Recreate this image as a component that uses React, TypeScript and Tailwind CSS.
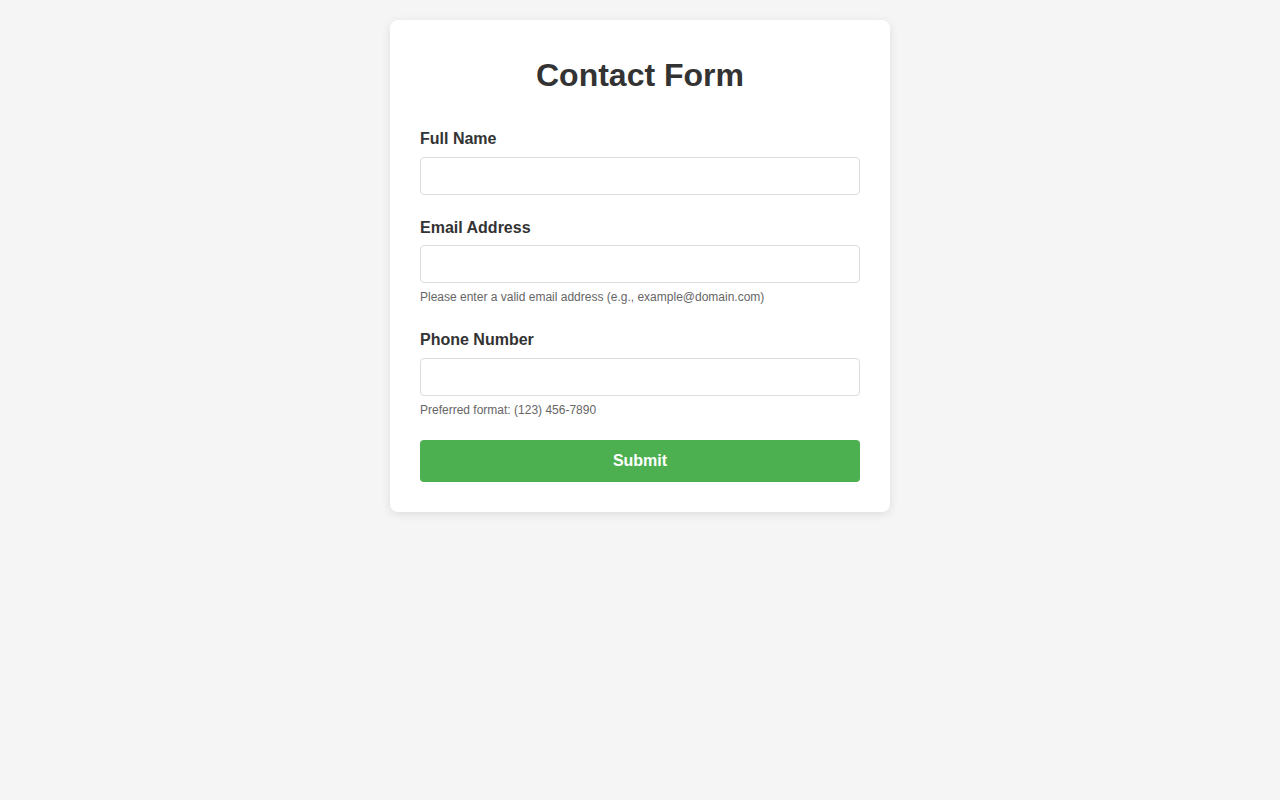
export default function App() {
  return (
    <div className="min-h-screen bg-[#f5f5f5] pt-[20px] font-['Liberation_Sans',Arial,sans-serif] text-[#333]">
      <div className="mx-auto w-[500px] rounded-[8px] bg-white px-[30px] pt-[37px] pb-[30px] shadow-[0_2px_10px_rgba(0,0,0,0.1)]">
        <h1 className="mb-[35px] text-center text-[32px] font-bold leading-[37px]">Contact Form</h1>

        <form onSubmit={(e) => e.preventDefault()}>
          {/* Full name */}
          <div className="mb-[23px]">
            <label htmlFor="name" className="mb-[9px] block text-[16px] font-bold leading-[19px]">
              Full Name
            </label>
            <input
              id="name"
              type="text"
              className="block h-[38px] w-full rounded-[4px] border border-[#ddd] px-[10px] text-[14px] outline-none"
            />
          </div>

          {/* Email */}
          <div className="mb-[24px]">
            <label htmlFor="email" className="mb-2 block text-[16px] font-bold leading-[19px]">
              Email Address
            </label>
            <input
              id="email"
              type="email"
              className="block h-[38px] w-full rounded-[4px] border border-[#ddd] px-[10px] text-[14px] outline-none"
            />
            <small className="mt-[5px] block text-[12px] leading-[18px] text-[#666]">
              Please enter a valid email address (e.g., example@domain.com)
            </small>
          </div>

          {/* Phone */}
          <div className="mb-[21px]">
            <label htmlFor="phone" className="mb-[9px] block text-[16px] font-bold leading-[19px]">
              Phone Number
            </label>
            <input
              id="phone"
              type="tel"
              className="block h-[38px] w-full rounded-[4px] border border-[#ddd] px-[10px] text-[14px] outline-none"
            />
            <small className="mt-[5px] block text-[12px] leading-[18px] text-[#666]">
              Preferred format: (123) 456-7890
            </small>
          </div>

          <button
            type="submit"
            className="block h-[42px] w-full rounded-[4px] bg-[#4caf50] text-[16px] font-bold text-white"
          >
            Submit
          </button>
        </form>
      </div>
    </div>
  );
}
